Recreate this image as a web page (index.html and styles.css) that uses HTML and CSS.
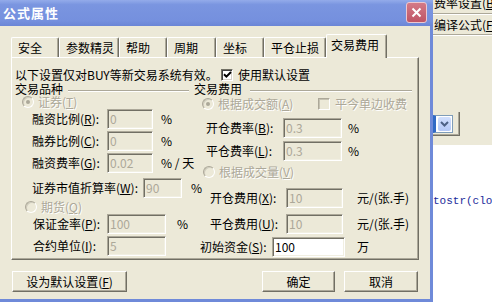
FILE: index.html
```html
<!DOCTYPE html>
<html>
<head>
    <meta charset="utf-8">
    <title>公式属性</title>
    <link rel="stylesheet" href="styles.css">
</head>
<body>
<div class="screen">
    <div class="dialog">
        <div class="titlebar">
            <span class="title">公式属性</span>
            <button class="close">
                <svg width="11" height="11" viewBox="0 0 11 11"><path d="M1.5 1.5L9.5 9.5M9.5 1.5L1.5 9.5" stroke="#fff" stroke-width="2"/></svg>
            </button>
        </div>
        <div class="dlg-body">
            <div class="tabs">
                <div class="tab tab-2">安全</div>
                <div class="tab tab-4">参数精灵</div>
                <div class="tab tab-2">帮助</div>
                <div class="tab tab-2w">周期</div>
                <div class="tab tab-2">坐标</div>
                <div class="tab tab-4w">平仓止损</div>
                <div class="tab active">交易费用</div>
            </div>
            <div class="panel">
                <div class="note">
                    <span class="note-text">以下设置仅对BUY等新交易系统有效。</span>
                    <span class="check on">
                        <svg width="9" height="9" viewBox="0 0 9 9"><path d="M1 4.2L3.4 6.6L8 2" stroke="#000" stroke-width="2" fill="none"/></svg>
                    </span>
                    <span class="check-label">使用默认设置</span>
                </div>
                <div class="cols">
                    <!-- 交易品种 -->
                    <div class="col col-left">
                        <div class="row row-head"><span class="group-title">交易品种</span><span class="etch"></span></div>
                        <div class="row row-radio stock-opt"><span class="radio on"></span><span class="dim">证券(<u>T</u>)</span></div>
                        <div class="row row-field stock-row"><label class="lbl">融资比例(<u>R</u>):</label><input disabled value="0"><span class="unit">%</span></div>
                        <div class="row row-field stock-row"><label class="lbl">融券比例(<u>C</u>):</label><input disabled value="0"><span class="unit">%</span></div>
                        <div class="row row-field stock-row"><label class="lbl">融资费率(<u>G</u>):</label><input disabled value="0.02"><span class="unit">% / 天</span></div>
                        <div class="row row-field mv-row"><label class="lbl">证券市值折算率(<u>W</u>):</label><input disabled value="90"><span class="unit">%</span></div>
                        <div class="row row-radio fut-opt"><span class="radio"></span><span class="dim">期货(<u>Q</u>)</span></div>
                        <div class="row row-field fut-row"><label class="lbl">保证金率(<u>P</u>):</label><input disabled value="100"><span class="unit">%</span></div>
                        <div class="row row-field fut-row"><label class="lbl">合约单位(<u>I</u>):</label><input disabled value="5"></div>
                    </div>
                    <!-- 交易费用 -->
                    <div class="col col-right">
                        <div class="row row-head fee-head"><span class="group-title">交易费用</span><span class="etch"></span></div>
                        <div class="row row-radio amt-opt">
                            <span class="radio-group"><span class="radio on"></span><span class="dim">根据成交额(<u>A</u>)</span></span>
                            <span class="check off"></span><span class="dim">平今单边收费</span>
                        </div>
                        <div class="row row-field rate-row"><label class="lbl">开仓费率(<u>B</u>):</label><input disabled value="0.3"><span class="unit">%</span></div>
                        <div class="row row-field rate-row"><label class="lbl">平仓费率(<u>L</u>):</label><input disabled value="0.3"><span class="unit">%</span></div>
                        <div class="row row-radio vol-opt"><span class="radio"></span><span class="dim">根据成交量(<u>V</u>)</span></div>
                        <div class="row row-field fee-row"><label class="lbl">开仓费用(<u>X</u>):</label><input disabled value="10"><span class="unit">元/(张.手)</span></div>
                        <div class="row row-field fee-row"><label class="lbl">平仓费用(<u>U</u>):</label><input disabled value="10"><span class="unit">元/(张.手)</span></div>
                        <div class="row row-field fund-row"><label class="lbl">初始资金(<u>S</u>):</label><input value="100"><span class="unit">万</span></div>
                    </div>
                </div>
            </div>
            <div class="actions">
                <button class="btn btn-default">设为默认设置(<u>F</u>)</button>
                <button class="btn btn-ok">确定</button>
                <button class="btn btn-cancel">取消</button>
            </div>
        </div>
    </div>

    <div class="behind">
        <div class="menu-item first"><span>费率设置(<u>B</u></span></div>
        <div class="menu-item second"><span>编译公式(<u>F</u></span></div>
        <div class="toolbar">
            <div class="combo">
                <div class="combo-field">
                    <span class="combo-btn">
                        <svg width="9" height="6" viewBox="0 0 9 6"><path d="M1 1L4.5 4.5L8 1" stroke="#4d6185" stroke-width="2" fill="none"/></svg>
                    </span>
                </div>
            </div>
        </div>
        <div class="editor"><span class="code">tostr(clo</span></div>
    </div>
</div>
</body>
</html>
```

FILE: styles.css
```css
body {
    margin: 0;
    font-family: "Noto Sans CJK SC", "Liberation Sans", sans-serif;
    font-size: 12px;
    color: #000;
}

.screen {
    display: flex;
    width: 492px;
    height: 306px;
    overflow: hidden;
    background: #fff;
}

/* dialog window */

.dialog {
    width: 433px;
    height: 302px;
    flex: none;
    display: flex;
    flex-direction: column;
}

.titlebar {
    height: 26px;
    flex: none;
    display: flex;
    align-items: center;
    justify-content: space-between;
    padding: 0 6px 0 3px;
    background: linear-gradient(#93abea, #7a95e0 18%, #7590de 80%, #6b86d6);
}

.title {
    color: #fff;
    font-weight: bold;
    font-size: 13px;
    letter-spacing: 1px;
    line-height: 16px;
}

.close {
    width: 21px;
    height: 21px;
    margin-top: -1px;
    padding: 0;
    display: flex;
    align-items: center;
    justify-content: center;
    border: 1px solid #ecc8d0;
    border-radius: 3px;
    background: linear-gradient(#d47a87, #bf5566);
}

.dlg-body {
    flex: 1;
    display: flex;
    flex-direction: column;
    padding: 8px 11px 0;
    background: #ece9d8;
    border-right: 3px solid #6f8ad9;
    border-bottom: 3px solid #6f8ad9;
}

/* tabs */

.tabs {
    display: flex;
    align-items: flex-end;
    height: 24px;
    margin-bottom: -1px;
    position: relative;
    z-index: 2;
}

.tab {
    height: 20px;
    margin-bottom: 1px;
    box-sizing: border-box;
    padding: 2px 0 0 6px;
    line-height: 16px;
    white-space: nowrap;
    background: #ece9d8;
    border-top: 1px solid #fff;
    border-left: 1px solid #fff;
    border-right: 1px solid #716f64;
    border-radius: 2px 2px 0 0;
    box-shadow: inset -1px 0 0 #aca899;
}

.tab-2 { width: 48px; }
.tab-2w { width: 49px; }
.tab-4 { width: 60px; }
.tab-4w { width: 62px; }

.tab.active {
    width: 61px;
    height: 24px;
    margin-bottom: 0;
    padding-left: 4px;
}

/* tab page */

.panel {
    position: relative;
    z-index: 1;
    height: 203px;
    box-sizing: border-box;
    padding-top: 9px;
    border: 1px solid;
    border-color: #fff #716f64 #716f64 #fff;
    box-shadow: inset -1px -1px 0 #aca899;
}

.note {
    display: flex;
    align-items: center;
    height: 15px;
    padding-left: 3px;
    line-height: 15px;
}

.note-text {
    width: 206px;
    white-space: nowrap;
}

.check {
    width: 12px;
    height: 12px;
    box-sizing: border-box;
    display: flex;
    align-items: center;
    justify-content: center;
    border: 1px solid;
    border-color: #716f64 #fff #fff #716f64;
    box-shadow: inset 1px 1px 0 #404040, inset -1px -1px 0 #d4d0c8;
    background: #fff;
}

.check.off {
    border-color: #aca899 #fff #fff #aca899;
    box-shadow: inset 1px 1px 0 #c5c2b2;
    background: #ece9d8;
    margin-right: 5px;
}

.check-label {
    margin-left: 5px;
}

.cols {
    display: flex;
}

.col {
    display: grid;
}

.col-left {
    width: 178px;
    grid-template-rows: 13px 14px 22px 22px 25px 22px 14px 22px 20px;
}

.col-right {
    flex: 1;
    grid-template-rows: 15px 21px 23px 24px 23px 26px 23px 20px;
}

.row {
    display: flex;
    align-items: center;
    align-self: start;
    white-space: nowrap;
}

.row-head,
.row-radio {
    height: 14px;
    line-height: 14px;
}

.row-field {
    height: 20px;
    line-height: 20px;
}

.row-head {
    padding-left: 3px;
}

.fee-head {
    padding-left: 4px;
}

.group-title {
    flex: none;
}

.etch {
    flex: 1;
    height: 0;
    margin: 3px 13px 0 5px;
    border-top: 1px solid #aca899;
    border-bottom: 1px solid #fff;
}

.fee-head .etch {
    margin: 3px 6px 0 8px;
}

.radio {
    width: 12px;
    height: 12px;
    box-sizing: border-box;
    flex: none;
    margin-right: 4px;
    display: flex;
    align-items: center;
    justify-content: center;
    border-radius: 50%;
    border: 1px solid;
    border-color: #aca899 #fff #fff #aca899;
    box-shadow: inset 1px 1px 0 #cfccbd;
    background: #ece9d8;
}

.radio.on::after {
    content: "";
    width: 4px;
    height: 4px;
    border-radius: 50%;
    background: #aca899;
}

.dim {
    color: #aca899;
    text-shadow: 1px 1px 0 #fff;
}

.stock-opt { padding-left: 10px; }
.fut-opt { padding-left: 13px; }
.amt-opt { padding-left: 12px; }
.vol-opt { padding-left: 13px; }

.radio-group {
    display: flex;
    align-items: center;
    width: 116px;
}

/* edit fields */

input {
    height: 20px;
    box-sizing: border-box;
    margin: 0;
    padding: 0 2px;
    font: inherit;
    color: #000;
    background: #fff;
    border: 1px solid;
    border-color: #aca899 #fff #fff #aca899;
    box-shadow: inset 1px 1px 0 #716f64, inset -1px -1px 0 #f1efe2;
    outline: none;
}

input:disabled {
    color: #aca899;
    -webkit-text-fill-color: #aca899;
    background: #ece9d8;
    opacity: 1;
}

.lbl {
    flex: none;
}

.stock-row { padding-left: 20px; }
.stock-row .lbl { width: 75px; }
.stock-row input { width: 46px; }
.stock-row .unit { margin-left: 8px; }

.mv-row { padding-left: 20px; }
.mv-row .lbl { width: 111px; }
.mv-row input { width: 39px; }
.mv-row .unit { margin-left: 9px; }

.fut-row { padding-left: 21px; }
.fut-row .lbl { width: 74px; }
.fut-row input { width: 59px; }
.fut-row .unit { margin-left: 11px; }

.rate-row { padding-left: 16px; }
.rate-row .lbl { width: 77px; }
.rate-row input { width: 59px; }
.rate-row .unit { margin-left: 6px; }

.fee-row { padding-left: 20px; }
.fee-row .lbl { width: 76px; }
.fee-row input { width: 57px; }
.fee-row .unit { margin-left: 14px; }

.fund-row { padding-left: 10px; }
.fund-row .lbl { width: 72px; }
.fund-row input { width: 73px; }
.fund-row .unit { margin-left: 12px; }

/* buttons */

.actions {
    display: flex;
    gap: 9px;
    margin-top: 11px;
    padding: 0 1px;
}

.btn {
    height: 21px;
    box-sizing: border-box;
    padding: 0;
    font: inherit;
    color: #000;
    background: #ece9d8;
    border: 1px solid;
    border-color: #fff #716f64 #716f64 #fff;
    box-shadow: inset -1px -1px 0 #aca899;
}

.btn-default {
    width: 115px;
    margin-right: auto;
}

.btn-ok { width: 73px; }
.btn-cancel { width: 74px; }

/* window behind the dialog */

.behind {
    flex: 1;
    display: flex;
    flex-direction: column;
    background: #ece9d8;
    white-space: nowrap;
    overflow: hidden;
}

.menu-item {
    padding-left: 1px;
    overflow: hidden;
}

.menu-item.first {
    height: 13px;
    line-height: 12px;
    border-bottom: 1px solid #aca899;
}

.menu-item.first span {
    display: block;
    margin-top: -3px;
}

.menu-item.second {
    height: 19px;
    line-height: 19px;
    border-top: 1px solid #fff;
    border-bottom: 1px solid #aca899;
}

.toolbar {
    height: 109px;
    border-top: 1px solid #fff;
}

.combo {
    width: 27px;
    height: 24px;
    box-sizing: border-box;
    margin-top: 76px;
    display: flex;
    align-items: center;
    border-right: 1px solid #716f64;
    border-bottom: 1px solid #716f64;
    box-shadow: inset -1px -1px 0 #aca899;
}

.combo-field {
    width: 20px;
    height: 18px;
    box-sizing: border-box;
    display: flex;
    align-items: center;
    justify-content: flex-end;
    padding-right: 1px;
    background: #fff;
    border: 1px solid #7f9db9;
    border-left: 3px solid #316ac5;
}

.combo-btn {
    width: 13px;
    height: 14px;
    display: flex;
    align-items: center;
    justify-content: center;
    border-radius: 2px;
    background: linear-gradient(#d2e0fd, #b4c8f6);
}

.editor {
    flex: 1;
    background: #fff;
    padding-top: 45px;
}

.code {
    font-family: "Liberation Mono", monospace;
    font-size: 11px;
    line-height: 14px;
    color: #1c2c9c;
}
```
